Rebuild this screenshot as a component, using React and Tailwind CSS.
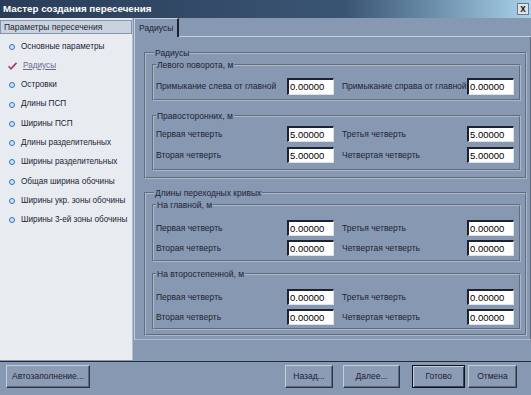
import React from "react";

const font = { fontFamily: '"Liberation Sans", Arial, sans-serif' };

const navItems = [
  "Основные параметры",
  "Радиусы",
  "Островки",
  "Длины ПСП",
  "Ширины ПСП",
  "Длины разделительных",
  "Ширины разделительных",
  "Общая ширина обочины",
  "Ширины укр. зоны обочины",
  "Ширины 3-ей зоны обочины",
];

const Bullet = () => (
  <span className="w-[6px] h-[6px] rounded-full border-[1.5px] border-[#2f74c4] bg-[#cfe0f4] shrink-0" />
);

const Check = () => (
  <svg width="9" height="8" viewBox="0 0 9 8" className="shrink-0 -ml-[1px]">
    <path d="M0.5 4.2 L3 6.8 L8.5 0.8" fill="none" stroke="#b0306a" strokeWidth="1.6" />
  </svg>
);

const Field = ({ value }) => (
  <div className="w-[47px] h-full bg-white border-t-2 border-l-2 border-r border-b border-t-[#1c2230] border-l-[#1c2230] border-r-[#dde3ec] border-b-[#dde3ec] text-black text-[9.5px] leading-none flex items-center pl-[1px]">
    {value}
  </div>
);

const Row = ({ l1, v1, l2, v2, h = "h-[17px]" }) => (
  <div className={`flex items-center ${h}`}>
    <span className="w-[133px] pl-[2px] whitespace-nowrap">{l1}</span>
    <Field value={v1} />
    <span className="w-[133px] pl-[8px] whitespace-nowrap">{l2}</span>
    <Field value={v2} />
  </div>
);

const Group = ({ title, className = "", children }) => (
  <fieldset className={`border-2 [border-style:groove] border-[#a9b8cc] p-0 m-0 min-w-0 ${className}`}>
    <legend className="ml-[2px] px-[1px] leading-[12px] text-[8.5px]">{title}</legend>
    {children}
  </fieldset>
);

const Button = ({ children, className = "", def }) => (
  <div
    className={`h-[23px] flex items-center justify-center text-[8.5px] text-[#1a2233] bg-[#8c9cb5] ${
      def
        ? "border border-[#10141c] shadow-[inset_1px_1px_0_#c4cfde,inset_-1px_-1px_0_#3a4658]"
        : "border border-t-[#c4cfde] border-l-[#c4cfde] border-r-[#2a3444] border-b-[#2a3444] shadow-[inset_-1px_-1px_0_#5c6a80]"
    } ${className}`}
  >
    {children}
  </div>
);

export default function App() {
  return (
    <div style={font} className="w-[531px] h-[395px] flex flex-col bg-[#8798b2] text-[#1c2434] overflow-hidden">
      {/* Title bar */}
      <div className="h-[18px] shrink-0 flex items-center justify-between pl-[3px] pr-[2px] bg-gradient-to-r from-[#2a3d58] via-[#3a5574] via-65% to-[#a9d3ea]">
        <span className="text-white font-bold text-[9.8px]">Мастер создания пересечения</span>
        <div className="w-[12px] h-[12px] bg-[#dfe3e8] border border-[#6d7888] flex items-center justify-center text-[10px] font-bold leading-none text-[#1a1f28]">
          x
        </div>
      </div>

      {/* Main */}
      <div className="flex h-[343px] shrink-0">
        {/* Left nav */}
        <div className="w-[133px] h-[342px] bg-[#e8ecf1] border-r border-[#b4bfcd] flex flex-col text-[8.2px]">
          <div className="mt-[2px] h-[14px] bg-[#c9d3df] border border-[#8494ab] flex items-center pl-[3px] text-[8.5px] text-[#1c2434] whitespace-nowrap">
            Параметры пересечения
          </div>
          <div className="pt-[3px] flex flex-col">
            {navItems.map((item, i) => (
              <div key={item} className="h-[19.3px] flex items-center gap-[6px] pl-[9px] whitespace-nowrap">
                {i === 1 ? <Check /> : <Bullet />}
                <span className={i === 1 ? "text-[#6d6a92] underline" : "text-[#1c2434]"}>{item}</span>
              </div>
            ))}
          </div>
        </div>

        {/* Right */}
        <div className="flex-1 flex flex-col ml-[1px]">
          <div className="h-[19px] flex items-end">
            <div className="w-[45px] h-[19px] border-t border-l border-[#c4cfde] border-r-2 border-r-[#1c2230] flex items-center pl-[4px] text-[8.5px]">
              Радиусы
            </div>
            <div className="flex-1 border-b border-[#c4cfde]" />
          </div>

          <div className="h-[303px] border-l border-[#c4cfde] border-r border-r-[#5c6a80] border-b border-b-[#b0bdd0] pl-[9px] pr-[3px] pt-[10px] text-[8.5px]">
            <Group title="Радиусы" className="pl-[6px] pr-[4px] pb-[6px]">
              <Group title="Левого поворота, м" className="pb-[4px]">
                <div className="pt-[7px]">
                  <Row l1="Примыкание слева от главной" v1="0.00000" l2="Примыкание справа от главной" v2="0.00000" />
                </div>
              </Group>
              <Group title="Правосторонних, м" className="mt-[9px] pb-[6px]">
                <div className="pt-[4px] flex flex-col gap-[5px]">
                  <Row l1="Первая четверть" v1="5.00000" l2="Третья четверть" v2="5.00000" h="h-[16px]" />
                  <Row l1="Вторая четверть" v1="5.00000" l2="Четвертая четверть" v2="5.00000" h="h-[16px]" />
                </div>
              </Group>
            </Group>

            <Group title="Длины переходных кривых" className="mt-[8px] pl-[6px] pr-[4px] pb-[4px]">
              <Group title="На главной, м" className="pb-[4px]">
                <div className="pt-[9px] flex flex-col gap-[4px]">
                  <Row l1="Первая четверть" v1="0.00000" l2="Третья четверть" v2="0.00000" h="h-[16px]" />
                  <Row l1="Вторая четверть" v1="0.00000" l2="Четвертая четверть" v2="0.00000" h="h-[16px]" />
                </div>
              </Group>
              <Group title="На второстепенной, м" className="mt-[6px] pb-[3px]">
                <div className="pt-[9px] flex flex-col gap-[4px]">
                  <Row l1="Первая четверть" v1="0.00000" l2="Третья четверть" v2="0.00000" h="h-[16px]" />
                  <Row l1="Вторая четверть" v1="0.00000" l2="Четвертая четверть" v2="0.00000" h="h-[16px]" />
                </div>
              </Group>
            </Group>
          </div>
        </div>
      </div>

      {/* Bottom bar */}
      <div className="flex-1 border-t border-[#232a38] flex items-start pt-[3px] pl-[6px]">
        <Button className="w-[84px]">Автозаполнение...</Button>
        <div className="flex-1" />
        <Button className="w-[48px]">Назад...</Button>
        <Button className="w-[57px] ml-[10px]">Далее...</Button>
        <Button def className="w-[53px] ml-[12px]">Готово</Button>
        <Button className="w-[49px] ml-[3px] mr-[14px]">Отмена</Button>
      </div>
    </div>
  );
}
